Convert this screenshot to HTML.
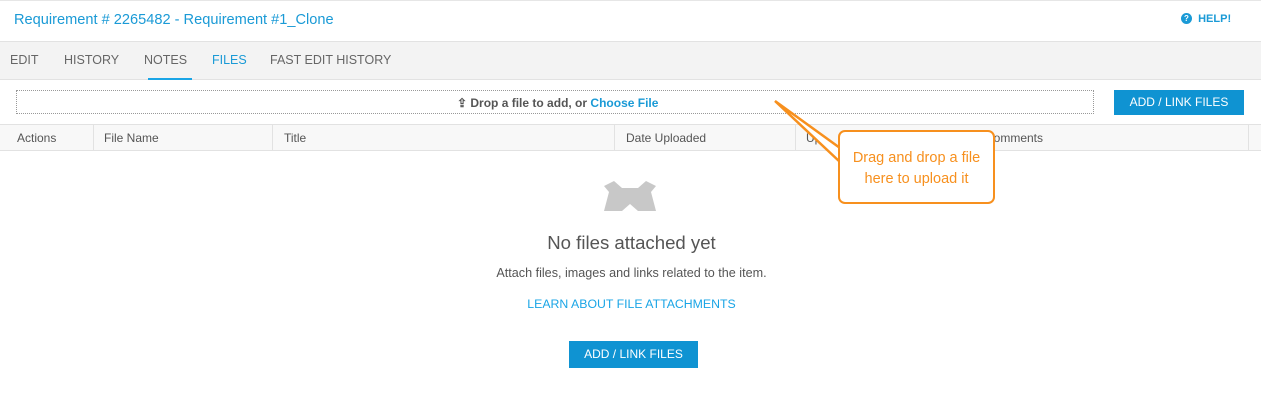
<!DOCTYPE html>
<html><head><style>
body{margin:0;width:1261px;height:409px;background:#fff;font-family:"Liberation Sans",sans-serif;position:relative;overflow:hidden}
.a{position:absolute}
</style></head><body>
<div class="a" style="left:0;top:0;width:1261px;height:1px;background:#e6e6e6"></div>
<div class="a" style="left:14px;top:12px;font-size:14.6px;color:#1a9ad6">Requirement # 2265482 - Requirement #1_Clone</div>
<div class="a" style="left:1181px;top:13px;font-size:11px;color:#1a9ad6;font-weight:bold"><span style="display:inline-block;width:11px;height:11px;border-radius:50%;background:#1a9ad6;color:#fff;font-size:8px;text-align:center;line-height:11px;vertical-align:1px">?</span>&nbsp; HELP!</div>
<div class="a" style="left:0;top:41px;width:1261px;height:39px;background:#f3f3f3;border-top:1px solid #e2e2e2;border-bottom:1px solid #e2e2e2;box-sizing:border-box"></div>
<div class="a" style="top:53px;font-size:12.5px;color:#666;left:10px">EDIT</div>
<div class="a" style="top:53px;font-size:12.5px;color:#666;left:64px">HISTORY</div>
<div class="a" style="top:53px;font-size:12.5px;color:#666;left:144px">NOTES</div>
<div class="a" style="top:53px;font-size:12.5px;color:#1a9ad6;left:212px">FILES</div>
<div class="a" style="top:53px;font-size:12.5px;color:#666;left:270px">FAST EDIT HISTORY</div>
<div class="a" style="left:148px;top:78px;width:44px;height:2px;background:#1aa5e6"></div>
<div class="a" style="left:16px;top:90px;width:1078px;height:24px;border:1px dotted #999;box-sizing:border-box"></div>
<div class="a" style="left:457px;top:96px;font-size:12px;color:#555;font-weight:bold">⇪ Drop a file to add, or <span style="color:#1a9ad6">Choose File</span></div>
<div class="a" style="left:1114px;top:90px;width:130px;height:25px;background:#0f93d2;color:#fff;font-size:12px;text-align:center;line-height:25px">ADD / LINK FILES</div>
<div class="a" style="left:0;top:124px;width:1261px;height:27px;background:#f8f8f8;border-top:1px solid #e2e2e2;border-bottom:1px solid #e2e2e2;box-sizing:border-box"></div>
<div class="a" style="top:131px;font-size:12px;color:#555;left:17px">Actions</div>
<div class="a" style="top:131px;font-size:12px;color:#555;left:104px">File Name</div>
<div class="a" style="top:131px;font-size:12px;color:#555;left:284px">Title</div>
<div class="a" style="top:131px;font-size:12px;color:#555;left:626px">Date Uploaded</div>
<div class="a" style="top:131px;font-size:12px;color:#555;left:806px">Up</div>
<div class="a" style="top:131px;font-size:12px;color:#555;left:985px">Comments</div>
<div class="a" style="left:93px;top:125px;width:1px;height:25px;background:#e2e2e2"></div>
<div class="a" style="left:272px;top:125px;width:1px;height:25px;background:#e2e2e2"></div>
<div class="a" style="left:614px;top:125px;width:1px;height:25px;background:#e2e2e2"></div>
<div class="a" style="left:795px;top:125px;width:1px;height:25px;background:#e2e2e2"></div>
<div class="a" style="left:1248px;top:125px;width:1px;height:25px;background:#e2e2e2"></div>
<svg class="a" style="left:600px;top:180px" width="60" height="32"><path d="M4 31 L9 12 L4 6 L14 1 L22 8 L38 8 L46 1 L56 6 L51 12 L56 31 L38 31 L30 24 L22 31Z" fill="#c8c8c8"/><path d="M25 31 L30 25 L35 31Z" fill="#fff"/></svg>
<div class="a" style="left:0;width:1263px;top:232px;text-align:center;font-size:18.6px;color:#555">No files attached yet</div>
<div class="a" style="left:0;width:1263px;top:266px;text-align:center;font-size:12.6px;color:#555">Attach files, images and links related to the item.</div>
<div class="a" style="left:0;width:1263px;top:297px;text-align:center;font-size:12.3px;color:#1aa5e6">LEARN ABOUT FILE ATTACHMENTS</div>
<div class="a" style="left:569px;top:341px;width:129px;height:27px;background:#0f93d2;color:#fff;font-size:12px;text-align:center;line-height:27px">ADD / LINK FILES</div>
<svg class="a" style="left:0;top:0" width="1261" height="409"><path d="M840 148 L775 101 L840 162" fill="#fff" stroke="#f7901e" stroke-width="2.5"/></svg>
<div class="a" style="left:838px;top:130px;width:157px;height:74px;border:2px solid #f7901e;border-radius:7px;background:#fff;box-sizing:border-box;color:#f7901e;font-size:14.5px;text-align:center;padding-top:16px;line-height:21px">Drag and drop a file<br>here to upload it</div>
</body></html>
